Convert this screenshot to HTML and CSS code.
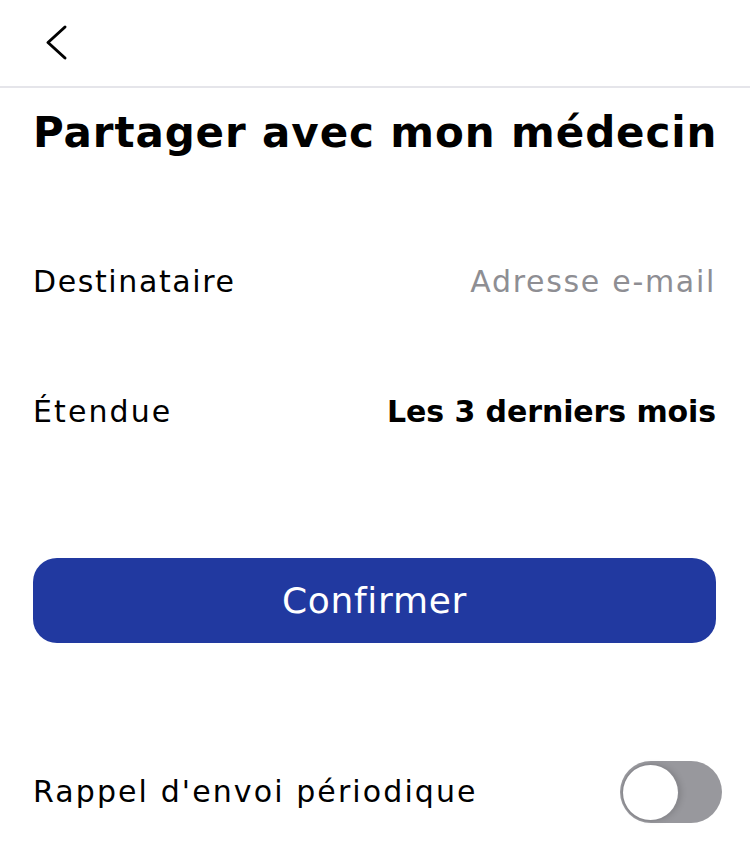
FILE: index.html
```html
<!DOCTYPE html>
<html lang="fr">
<head>
<meta charset="utf-8">
<title>Partager avec mon médecin</title>
<link rel="stylesheet" href="styles.css">
</head>
<body>
<header class="header">
  <button class="back" aria-label="Retour">
    <svg width="24" height="38" viewBox="0 0 24 38" fill="none" stroke="#000" stroke-width="3" stroke-linecap="round" stroke-linejoin="round"><path d="M21 3 L4 18.5 L21 34"/></svg>
  </button>
</header>
<main class="content">
  <h1 class="title">Partager avec mon médecin</h1>
  <div class="row row-first">
    <span class="label">Destinataire</span>
    <span class="placeholder">Adresse e-mail</span>
  </div>
  <div class="row row-second">
    <span class="label label-wide">Étendue</span>
    <span class="value">Les 3 derniers mois</span>
  </div>
  <button class="confirm">Confirmer</button>
  <div class="toggle-row">
    <span class="label label-wide">Rappel d'envoi périodique</span>
    <span class="toggle"><span class="knob"></span></span>
  </div>
</main>
</body>
</html>
```
FILE: styles.css
```css
* { box-sizing: border-box; }
html, body { margin: 0; padding: 0; background: #fff; }
body {
  font-family: "DejaVu Sans", Inter, sans-serif;
  color: #000;
  width: 750px;
  height: 856px;
  overflow: hidden;
}
.header {
  height: 88px;
  border-bottom: 2px solid #e5e5ea;
  display: flex;
  align-items: flex-start;
}
.back {
  margin: 24px 0 0 44px;
  padding: 0;
  border: 0;
  background: none;
  width: 24px;
  height: 38px;
  display: block;
}
.back svg { display: block; }
.content {
  padding: 0 34px 0 33px;
  display: flex;
  flex-direction: column;
}
.title {
  margin: 20px 0 0;
  font-size: 42px;
  line-height: 50px;
  font-weight: 700;
  letter-spacing: 0.9px;
  white-space: nowrap;
}
.row {
  display: flex;
  justify-content: space-between;
  align-items: baseline;
  font-size: 30px;
  line-height: 36px;
}
.row-first { margin-top: 106px; }
.row-second { margin-top: 94px; }
.label { font-weight: 400; letter-spacing: 1.6px; }
.label-wide { letter-spacing: 2.1px; }
.placeholder { color: #8e8e93; font-weight: 400; letter-spacing: 1.7px; }
.value { font-weight: 700; letter-spacing: -0.1px; }
.confirm {
  margin-top: 128px;
  height: 85px;
  width: 100%;
  border: 0;
  border-radius: 24px;
  background: #2139a0;
  color: #fff;
  font-family: inherit;
  font-size: 36px;
  font-weight: 400;
  letter-spacing: 0.7px;
  display: flex;
  align-items: center;
  justify-content: center;
  padding: 0;
}
.toggle-row {
  margin-top: 118px;
  display: flex;
  justify-content: space-between;
  align-items: center;
  font-size: 30px;
  line-height: 36px;
  margin-right: -6px;
}
.toggle {
  width: 102px;
  height: 62px;
  border-radius: 31px;
  background: #98989d;
  display: flex;
  align-items: center;
  padding-left: 3px;
}
.knob {
  width: 55px;
  height: 55px;
  border-radius: 50%;
  background: #fff;
  box-shadow: 0 0 0 1.5px #8a8a8f, 3px 0 6px rgba(0,0,0,0.15);
}
```
